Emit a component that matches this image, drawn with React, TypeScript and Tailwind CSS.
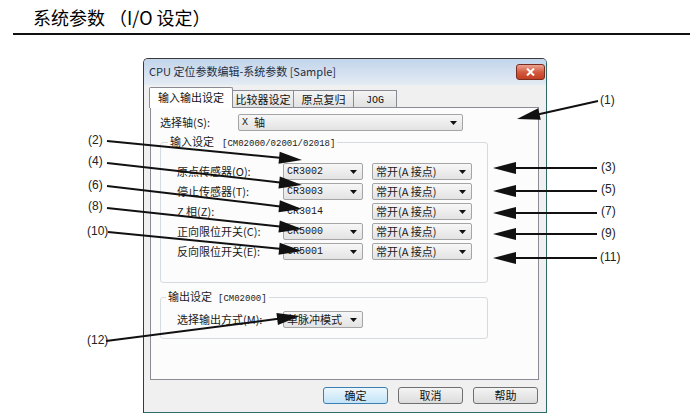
import React from "react";

const CJK = "[font-family:'Noto_Sans_CJK_SC',sans-serif]";
const MONO = "[font-family:'Liberation_Mono',monospace]";

const Tri = () => (
  <svg width="7" height="4" viewBox="0 0 7 4" className="shrink-0">
    <path d="M0 0H7L3.5 4Z" fill="#111" />
  </svg>
);

function Combo({ w, children }: { w: string; children: React.ReactNode }) {
  return (
    <div
      className={`flex h-[17px] items-center justify-between rounded-[2px] border border-[#a5a5a5] bg-gradient-to-b from-[#f7f7f7] to-[#e3e3e3] pl-[3px] pr-[5px] ${w}`}
    >
      <span className="flex items-center leading-[13px] text-[#1a1a1a]">{children}</span>
      <Tri />
    </div>
  );
}

function Row({ label, value, plain }: { label: string; value: string; plain?: boolean }) {
  return (
    <div className="flex h-[17px] items-center">
      <span className="w-[106px] text-[11px] leading-[13px] text-[#1a1a1a]">{label}</span>
      {plain ? (
        <div className={`w-[80px] pl-[4px] text-[10px] leading-[13px] text-[#1a1a1a] ${MONO}`}>{value}</div>
      ) : (
        <Combo w="w-[80px]">
          <span className={`text-[10px] ${MONO}`}>{value}</span>
        </Combo>
      )}
      <div className="ml-[9px]">
        <Combo w="w-[100px]">
          <span className="text-[11px]">常开(A 接点)</span>
        </Combo>
      </div>
    </div>
  );
}

function arrow(x1: number, y1: number, x2: number, y2: number, L = 23, W = 6) {
  const dx = x2 - x1;
  const dy = y2 - y1;
  const len = Math.hypot(dx, dy);
  const ux = dx / len;
  const uy = dy / len;
  const bx = x2 - ux * L;
  const by = y2 - uy * L;
  const nx = -uy;
  const ny = ux;
  return {
    line: [x1, y1, bx + ux * 3, by + uy * 3],
    pts: `${x2},${y2} ${bx + nx * W},${by + ny * W} ${bx - nx * W},${by - ny * W}`,
  };
}

const arrows = [
  arrow(598, 101, 517, 119),
  arrow(107, 141, 302, 160),
  arrow(107, 163, 302, 185),
  arrow(107, 186, 302, 209),
  arrow(107, 208, 302, 229),
  arrow(108, 232, 302, 251),
  arrow(106, 341, 300, 316),
  arrow(597, 168, 493, 168),
  arrow(597, 191, 493, 191),
  arrow(597, 213, 493, 213),
  arrow(597, 234, 493, 234),
  arrow(597, 258, 493, 258),
];

const labels: [string, number, number][] = [
  ["(1)", 600, 101],
  ["(2)", 88, 141],
  ["(4)", 88, 162],
  ["(6)", 88, 186],
  ["(8)", 88, 207],
  ["(10)", 87, 232],
  ["(12)", 87, 341],
  ["(3)", 601, 168],
  ["(5)", 601, 190],
  ["(7)", 601, 212],
  ["(9)", 601, 234],
  ["(11)", 600, 258],
];

export default function App() {
  return (
    <div className={`relative h-[420px] w-[690px] overflow-hidden bg-white ${CJK}`}>
      <div className="h-[33px] pl-[33px] pt-[7px] text-[18px] leading-[20px] text-[#000]">
        系统参数 （I/O 设定）
      </div>
      <div className="ml-[13px] h-[2px] bg-[#111]" />

      <div className="ml-[143px] mt-[23px] flex h-[355px] w-[404px] flex-col rounded-t-[5px] border border-[#3a3a3a] border-b-[#2c6b66] border-r-[#2c6b66] bg-[#f0f0f0]">
        {/* title bar */}
        <div className="flex h-[26px] items-start justify-between rounded-t-[4px] bg-gradient-to-b from-[#c2d5eb] to-[#e4ebf3] pl-[5px] pr-[1px]">
          <span className="pt-[6px] text-[11px] leading-[13px] text-[#1f2f44]">
            CPU 定位参数编辑-系统参数 [Sample]
          </span>
          <div className="mt-[5px] flex h-[16px] w-[29px] items-center justify-center rounded-[3px] border border-[#7b2c20] bg-gradient-to-b from-[#e9a493] via-[#d45a40] to-[#c23e22]">
            <svg width="9" height="8" viewBox="0 0 9 8">
              <path d="M1 0.5L8 7.5M8 0.5L1 7.5" stroke="#fff" strokeWidth="2" />
            </svg>
          </div>
        </div>

        {/* tabs */}
        <div className="relative z-10 -mb-px flex h-[23px] items-end pl-[5px] text-[11px] leading-[13px] text-[#111]">
          <div className="flex h-[21px] w-[84px] items-start justify-center rounded-t-[2px] border border-b-0 border-[#898c95] bg-white pt-[3px]">
            输入输出设定
          </div>
          <div className="flex h-[18px] w-[61px] items-start justify-center border border-l-0 border-[#898c95] bg-gradient-to-b from-[#f4f4f4] to-[#e2e2e2] pt-[2px]">
            比较器设定
          </div>
          <div className="flex h-[18px] w-[60px] items-start justify-center border border-l-0 border-[#898c95] bg-gradient-to-b from-[#f4f4f4] to-[#e2e2e2] pt-[2px]">
            原点复归
          </div>
          <div className={`flex h-[18px] w-[43px] items-start justify-center border border-l-0 border-[#898c95] bg-gradient-to-b from-[#f4f4f4] to-[#e2e2e2] pt-[3px] text-[10px] ${MONO}`}>
            JOG
          </div>
        </div>

        {/* panel */}
        <div className="ml-[6px] h-[273px] w-[389px] border border-[#898c95] bg-[#fcfcfc]">
          <div className="mt-[6px] flex h-[17px] items-center pl-[9px]">
            <span className="w-[78px] text-[11px] leading-[13px] text-[#1a1a1a]">选择轴(S):</span>
            <Combo w="w-[225px]">
              <span className={`text-[10px] ${MONO}`}>X</span>
              <span className="ml-[6px] text-[11px]">轴</span>
            </Combo>
          </div>

          <fieldset className="ml-[9px] mt-[3px] w-[328px] rounded-[3px] border border-[#d5dbe0]">
            <legend className="ml-[7px] px-[2px] text-[11px] leading-[14px] text-[#1a1a1a]">
              输入设定
              <span className={`ml-[8px] text-[9px] ${MONO}`}>[CM02000/02001/02018]</span>
            </legend>
            <div className="flex flex-col gap-[3px] pb-[22px] pl-[16px] pt-[12px]">
              <Row label="原点传感器(O):" value="CR3002" />
              <Row label="停止传感器(T):" value="CR3003" />
              <Row label="Z 相(Z):" value="CR3014" plain />
              <Row label="正向限位开关(C):" value="CR5000" />
              <Row label="反向限位开关(E):" value="CR5001" />
            </div>
          </fieldset>

          <fieldset className="ml-[9px] mt-[6px] w-[328px] rounded-[3px] border border-[#d5dbe0]">
            <legend className="ml-[5px] px-[2px] text-[11px] leading-[14px] text-[#1a1a1a]">
              输出设定
              <span className={`ml-[6px] text-[9px] ${MONO}`}>[CM02000]</span>
            </legend>
            <div className="flex h-[17px] items-center pl-[16px] mt-[5px] mb-[10px]">
              <span className="w-[106px] text-[11px] leading-[13px] text-[#1a1a1a]">选择输出方式(M):</span>
              <Combo w="w-[80px]">
                <span className="text-[11px]">单脉冲模式</span>
              </Combo>
            </div>
          </fieldset>
        </div>

        {/* buttons */}
        <div className="mt-[7px] flex justify-end gap-[10px] pr-[8px] text-[11px] leading-[13px] text-[#111]">
          <div className="flex h-[17px] w-[65px] items-center justify-center rounded-[3px] border border-[#3c7fb1] bg-gradient-to-b from-[#ecf7fd] to-[#c2e4f6]">
            确定
          </div>
          <div className="flex h-[17px] w-[65px] items-center justify-center rounded-[3px] border border-[#707070] bg-gradient-to-b from-[#f4f4f4] to-[#dcdcdc]">
            取消
          </div>
          <div className="flex h-[17px] w-[65px] items-center justify-center rounded-[3px] border border-[#707070] bg-gradient-to-b from-[#f4f4f4] to-[#dcdcdc]">
            帮助
          </div>
        </div>
      </div>

      <svg className="pointer-events-none absolute inset-0" width="690" height="420" viewBox="0 0 690 420">
        {arrows.map((a, i) => (
          <g key={i}>
            <line x1={a.line[0]} y1={a.line[1]} x2={a.line[2]} y2={a.line[3]} stroke="#111" strokeWidth="2" />
            <polygon points={a.pts} fill="#111" />
          </g>
        ))}
        {labels.map(([t, x, y]) => (
          <text
            key={t}
            x={x}
            y={y}
            dominantBaseline="middle"
            fontSize="12"
            fontFamily="'Liberation Sans', sans-serif"
            fill="#222"
          >
            {t}
          </text>
        ))}
      </svg>
    </div>
  );
}
